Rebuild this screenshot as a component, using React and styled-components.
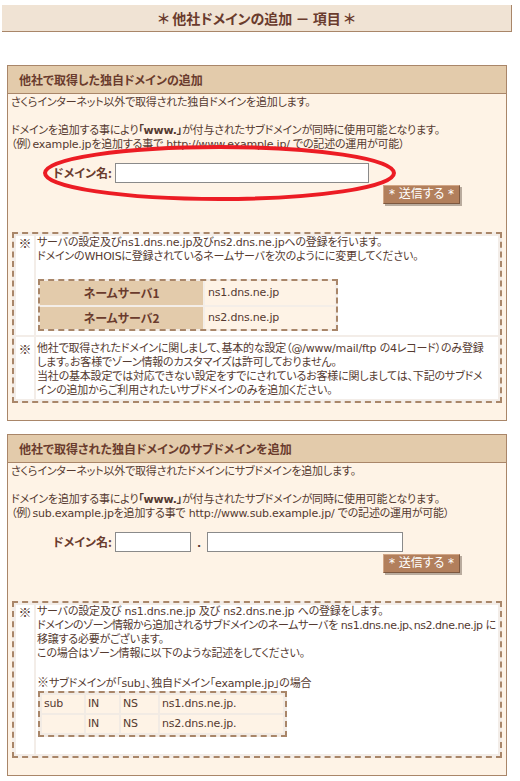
import React from "react";
import styled, { createGlobalStyle } from "styled-components";

const Global = createGlobalStyle`
  html, body { margin: 0; padding: 0; background: #ffffff; }
  body {
    font-family: "DejaVu Sans", "Noto Sans CJK JP", sans-serif;
    font-size: 11px;
    line-height: 14px;
    letter-spacing: -0.2px;
    color: #553a30;
    font-feature-settings: "palt";
  }
  * { box-sizing: border-box; }
`;

const Page = styled.div`
  position: relative;
  width: 520px;
  padding: 5px 0 8px 2px;
`;

const TitleBar = styled.h1`
  margin: 0;
  width: 510px;
  height: 27px;
  background: #f0e3d4;
  border-right: 1px solid #a98669;
  border-bottom: 1px solid #a98669;
  display: flex;
  align-items: center;
  justify-content: center;
  font-family: "Noto Sans CJK JP", sans-serif;
  font-size: 14px;
  font-weight: bold;
  letter-spacing: 0;
  color: #6a3b2d;
  line-height: 1;
`;

const Section = styled.section`
  width: 500px;
  margin: ${(p) => p.$top}px 0 0 5px;
  border: 1px solid #a98669;
  background: #fef3e6;
  padding-bottom: 17px;
`;

const SectionHeader = styled.h2`
  margin: 0;
  height: 28px;
  padding-left: 11px;
  display: flex;
  align-items: center;
  background: #e3cbab;
  border-bottom: 1px solid #a98669;
  font-family: "Noto Sans CJK JP", sans-serif;
  font-size: 12px;
  font-weight: bold;
  letter-spacing: 0;
  color: #6a3b2d;
`;

const SectionBody = styled.div`
  padding: 2px 3px 0 3px;
`;

const Para = styled.p`
  margin: 0 0 ${(p) => (p.$gap ? 14 : 0)}px 0;
  white-space: nowrap;
`;

const Tight = styled.span`
  letter-spacing: -0.45px;
`;

const RefMark = styled.span`
  font-family: "Noto Sans CJK JP", sans-serif;
  font-size: 12px;
  letter-spacing: 0;
`;

const FormRow = styled.div`
  display: flex;
  align-items: center;
  margin-top: 11px;
  padding-left: 42px;
`;

const Label = styled.label`
  width: 62px;
  font-family: "Noto Sans CJK JP", sans-serif;
  font-size: 12px;
  font-weight: bold;
  letter-spacing: 0;
  color: #6a3b2d;
`;

const TextInput = styled.input`
  width: ${(p) => p.$w}px;
  height: 20px;
  margin: 0;
  padding: 0 2px;
  border: 1px solid #8a8a8a;
  background: #ffffff;
  font: inherit;
`;

const Dot = styled.span`
  width: 16px;
  text-align: center;
  font-weight: bold;
  color: #553a30;
  padding-top: 4px;
`;

const ButtonRow = styled.div`
  display: flex;
  justify-content: flex-end;
  margin-top: 2px;
  padding-right: 43px;
`;

const SubmitButton = styled.button`
  width: 77px;
  height: 19px;
  margin: 0;
  padding: 0;
  background: #b27f5c;
  border-top: 1px solid #d2a686;
  border-left: 1px solid #d2a686;
  border-right: 1px solid #7d5840;
  border-bottom: 1px solid #7d5840;
  box-shadow: 2px 2px 0 #b9ab9e;
  color: #ffffff;
  font-family: "DejaVu Sans", "Noto Sans CJK JP", sans-serif;
  font-feature-settings: "palt";
  font-size: 12px;
  line-height: 17px;
  cursor: pointer;
`;

const NoteTable = styled.table`
  width: 490px;
  table-layout: fixed;
  margin: 28px 0 0 1px;
  border: 2px dashed #a98669;
  border-spacing: 2px;
  background: #f3ede8;
`;

const MarkCol = styled.col`
  width: 18px;
`;

const Mark = styled.td`
  padding: ${(p) => p.$pt || 0}px 0 0 0;
  background: #ffffff;
  vertical-align: top;
  text-align: center;
  font-family: "Noto Sans CJK JP", sans-serif;
  font-size: 13px;
  letter-spacing: 0;
`;

const NoteCell = styled.td`
  padding: ${(p) => p.$pt || 0}px 1px 1px 1px;
  background: #ffffff;
  vertical-align: top;
  white-space: nowrap;
`;

const NsTable = styled.table`
  width: 300px;
  margin: 1px 0 3px 1px;
  border: 2px dashed #a98669;
  border-spacing: 0;
  background: #f4eee8;

  tr + tr th,
  tr + tr td {
    border-top: 2px solid #f4eee8;
  }
`;

const NsHead = styled.th`
  width: 163px;
  height: 24px;
  padding: 0;
  background: #e3cbab;
  color: #6a3b2d;
  font-family: "Noto Sans CJK JP", sans-serif;
  font-size: 12px;
  font-weight: bold;
  letter-spacing: 0;
  text-align: center;
`;

const NsValue = styled.td`
  height: 24px;
  padding: 0 0 0 3px;
  background: #fef3e6;
  border-left: 2px solid #f4eee8;
  border-right: 1px solid #f4eee8;
`;

const ZoneTable = styled.table`
  width: 249px;
  margin: 0 0 16px 1px;
  border: 2px dashed #a98669;
  border-spacing: 2px;
  background: #f2ebe4;
`;

const ZoneCell = styled.td`
  width: ${(p) => p.$w}px;
  padding: 2px 2px;
  background: #fef3e6;
  white-space: nowrap;
`;

const Overlay = styled.svg`
  position: absolute;
  left: 0;
  top: 0;
  pointer-events: none;
`;

function SubmitRow() {
  return (
    <ButtonRow>
      <SubmitButton type="button">* 送信する *</SubmitButton>
    </ButtonRow>
  );
}

export default function App() {
  return (
    <>
      <Global />
      <Page>
        <TitleBar>＊ 他社ドメインの追加 － 項目 ＊</TitleBar>

        <Section $top={33}>
          <SectionHeader>他社で取得した独自ドメインの追加</SectionHeader>
          <SectionBody>
            <Para $gap>さくらインターネット以外で取得された独自ドメインを追加します。</Para>
            <Para>
              ドメインを追加する事により<b>「www.」</b>が付与されたサブドメインが同時に使用可能となります。
            </Para>
            <Para>（例）example.jpを追加する事で http://www.example.jp/ での記述の運用が可能）</Para>
            <FormRow>
              <Label>ドメイン名:</Label>
              <TextInput $w={254} type="text" />
            </FormRow>
            <SubmitRow />
            <NoteTable>
              <colgroup>
                <MarkCol />
                <col />
              </colgroup>
              <tbody>
                <tr>
                  <Mark>※</Mark>
                  <NoteCell>
                    サーバの設定及びns1.dns.ne.jp及びns2.dns.ne.jpへの登録を行います。
                    <br />
                    ドメインのWHOISに登録されているネームサーバを次のようにに変更してください。
                    <br />
                    <br />
                    <NsTable>
                      <tbody>
                        <tr>
                          <NsHead>ネームサーバ1</NsHead>
                          <NsValue>ns1.dns.ne.jp</NsValue>
                        </tr>
                        <tr>
                          <NsHead>ネームサーバ2</NsHead>
                          <NsValue>ns2.dns.ne.jp</NsValue>
                        </tr>
                      </tbody>
                    </NsTable>
                  </NoteCell>
                </tr>
                <tr>
                  <Mark $pt={5}>※</Mark>
                  <NoteCell $pt={5}>
                    他社で取得されたドメインに関しまして、基本的な設定（@/www/mail/ftp の4レコード）のみ登録
                    <br />
                    します。お客様でゾーン情報のカスタマイズは許可しておりません。
                    <br />
                    当社の基本設定では対応できない設定をすでにされているお客様に関しましては、下記のサブドメ
                    <br />
                    インの追加からご利用されたいサブドメインのみを追加ください。
                  </NoteCell>
                </tr>
              </tbody>
            </NoteTable>
          </SectionBody>
        </Section>

        <Section $top={13}>
          <SectionHeader>他社で取得された独自ドメインのサブドメインを追加</SectionHeader>
          <SectionBody>
            <Para $gap>さくらインターネット以外で取得されたドメインにサブドメインを追加します。</Para>
            <Para>
              ドメインを追加する事により<b>「www.」</b>が付与されたサブドメインが同時に使用可能となります。
            </Para>
            <Para>（例）sub.example.jpを追加する事で http://www.sub.example.jp/ での記述の運用が可能）</Para>
            <FormRow>
              <Label>ドメイン名:</Label>
              <TextInput $w={76} type="text" />
              <Dot>.</Dot>
              <TextInput $w={196} type="text" />
            </FormRow>
            <SubmitRow />
            <NoteTable>
              <colgroup>
                <MarkCol />
                <col />
              </colgroup>
              <tbody>
                <tr>
                  <Mark>※</Mark>
                  <NoteCell>
                    サーバの設定及び ns1.dns.ne.jp 及び ns2.dns.ne.jp への登録をします。
                    <br />
                    <Tight>
                      ドメインのゾーン情報から追加されるサブドメインのネームサーバを ns1.dns.ne.jp、ns2.dne.ne.jp に
                    </Tight>
                    <br />
                    移譲する必要がございます。
                    <br />
                    この場合はゾーン情報に以下のような記述をしてください。
                    <br />
                    <br />
                    <RefMark>※</RefMark>サブドメインが「sub」、独自ドメイン「example.jp」の場合
                    <ZoneTable>
                      <tbody>
                        <tr>
                          <ZoneCell $w={42}>sub</ZoneCell>
                          <ZoneCell $w={33}>IN</ZoneCell>
                          <ZoneCell $w={37}>NS</ZoneCell>
                          <ZoneCell $w={123}>ns1.dns.ne.jp.</ZoneCell>
                        </tr>
                        <tr>
                          <ZoneCell $w={42}></ZoneCell>
                          <ZoneCell $w={33}>IN</ZoneCell>
                          <ZoneCell $w={37}>NS</ZoneCell>
                          <ZoneCell $w={123}>ns2.dns.ne.jp.</ZoneCell>
                        </tr>
                      </tbody>
                    </ZoneTable>
                  </NoteCell>
                </tr>
              </tbody>
            </NoteTable>
          </SectionBody>
        </Section>

        <Overlay width="520" height="260" viewBox="0 0 520 260">
          <ellipse cx="219.5" cy="173" rx="174.5" ry="26" fill="none" stroke="#ec1c24" strokeWidth="4" />
        </Overlay>
      </Page>
    </>
  );
}
